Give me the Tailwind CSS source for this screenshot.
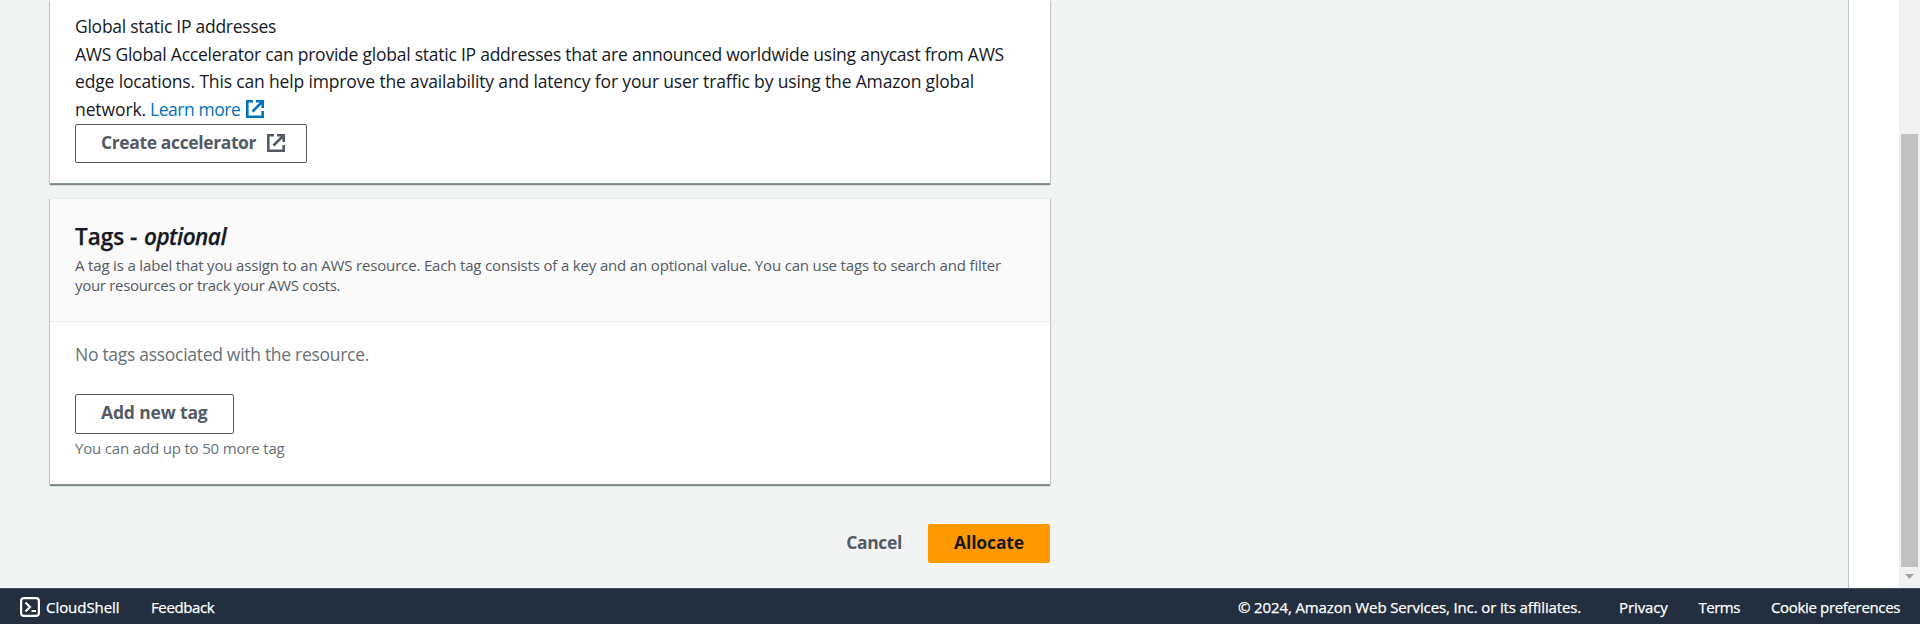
<!DOCTYPE html>
<html lang="en">
<head>
<meta charset="utf-8">
<title>Allocate Elastic IP address</title>
<script src="https://cdn.jsdelivr.net/npm/@tailwindcss/browser@4"></script>
</head>
<body class="flex h-[624px] w-[1920px] flex-col overflow-hidden bg-white font-['Open_Sans','Noto_Sans',sans-serif] text-[17.5px] leading-[27.5px] text-[#16191f]">
<div class="flex h-[588px] shrink-0">
  <main class="w-[1849px] border-r border-[#bfc6c6] bg-[#f2f3f3] pl-[50px]">
    <div class="w-[1000px]">
      <section class="h-[184px] border-b border-[#879596] bg-white px-[25px] pt-[13px] shadow-[0_1px_1px_0_rgba(0,28,36,.3),1px_1px_1px_0_rgba(0,28,36,.15),-1px_1px_1px_0_rgba(0,28,36,.15)]">
        <div class="whitespace-nowrap tracking-[-0.26px]">Global static IP addresses</div>
        <p class="whitespace-nowrap"><span class="block tracking-[-0.235px]">AWS Global Accelerator can provide global static IP addresses that are announced worldwide using anycast from AWS</span><span class="block tracking-[-0.155px]">edge locations. This can help improve the availability and latency for your user traffic by using the Amazon global</span><span class="flex items-center"><span class="w-[75px] tracking-[-0.1px]">network.</span><a class="flex items-center gap-[6px] tracking-[-0.45px] text-[#0073bb]">Learn more
          <svg class="size-[18px]" viewBox="0 0 18 18" fill="none" stroke="currentColor" stroke-width="2.6"><path d="M7 1.3H1.3v15.4h15.4V11M10 1.3h6.7V8M16.5 1.5L6.5 11.5"/></svg></a></span></p>
        <button class="mt-[1px] flex h-[39px] w-[232px] items-center rounded-[2px] border border-[#545b64] pb-[1px] pl-[25px] font-bold tracking-[-0.38px] text-[#545b64]"><span class="w-[166px] text-left">Create accelerator</span><svg class="size-[18px]" viewBox="0 0 18 18" fill="none" stroke="currentColor" stroke-width="2.6"><path d="M7 1.3H1.3v15.4h15.4V11M10 1.3h6.7V8M16.5 1.5L6.5 11.5"/></svg></button>
      </section>
      <section class="mt-[14px] h-[287px] border-b border-[#879596] bg-white shadow-[0_1px_1px_0_rgba(0,28,36,.3),1px_1px_1px_0_rgba(0,28,36,.15),-1px_1px_1px_0_rgba(0,28,36,.15)]">
        <header class="h-[124px] border-y border-t-[#eaeded] border-b-[#eaeded] bg-[#fafafa] px-[25px] pt-[23px]">
          <h2 class="flex whitespace-nowrap text-[22.5px] leading-[30px] font-semibold [-webkit-text-stroke:0.25px_#16191f]"><span class="w-[69px]">Tags -</span><i class="tracking-[-0.5px]">optional</i></h2>
          <p class="mt-[3px] whitespace-nowrap text-[15px] leading-5 text-[#545b64]"><span class="block tracking-[-0.165px]">A tag is a label that you assign to an AWS resource. Each tag consists of a key and an optional value. You can use tags to search and filter</span><span class="block tracking-[-0.31px]">your resources or track your AWS costs.</span></p>
        </header>
        <div class="px-[25px] pt-[19px]">
          <p class="tracking-[-0.29px] text-[#687078]">No tags associated with the resource.</p>
          <button class="mt-[25px] flex h-[40px] w-[159px] items-center rounded-[2px] border border-[#545b64] pb-[1px] pl-[25px] font-bold tracking-[-0.15px] text-[#545b64]">Add new tag</button>
          <p class="mt-1 text-[15px] leading-5 tracking-[-0.17px] text-[#687078]">You can add up to 50 more tag</p>
        </div>
      </section>
      <div class="mt-[39px] flex justify-end font-bold">
        <button class="mr-[26px] h-[39px] pb-[1px] tracking-[-0.35px] text-[#545b64]">Cancel</button>
        <button class="h-[39px] w-[122px] rounded-[2px] bg-[#ff9900] pb-[1px] tracking-[-0.15px] text-[#16191f]">Allocate</button>
      </div>
    </div>
  </main>
  <div class="ml-auto flex w-[21px] flex-col items-center bg-[#f1f1f1] pt-[134px]">
    <div class="h-[433px] w-[17px] bg-[#c1c1c1]"></div>
    <svg class="mt-[7px] h-[5px] w-[9px]" viewBox="0 0 9 5"><path d="M0 0h9L4.5 5z" fill="#a3a3a3"/></svg>
  </div>
</div>
<footer class="flex h-[36px] items-center border-t border-[#414d5c] bg-[#232f3e] pr-5 pl-5 text-[15px] leading-5 whitespace-nowrap text-white [-webkit-text-stroke:0.25px_white]">
  <svg class="size-5" viewBox="0 0 20 20" fill="none" stroke="currentColor" stroke-width="2.2"><rect x="1.1" y="1.1" width="17.8" height="17.8" rx="3"/><path d="M5.5 5.5l4.500 4.500-4.500 4.500M11.500 14h4.500"/></svg>
  <span class="ml-[6px] w-[105px] tracking-[-0.05px]">CloudShell</span>
  <span class="tracking-[-0.38px]">Feedback</span>
  <span class="ml-auto w-[381px] tracking-[-0.13px]">© 2024, Amazon Web Services, Inc. or its affiliates.</span>
  <span class="w-[79.5px] tracking-[-0.1px]">Privacy</span>
  <span class="w-[72.5px] tracking-[-0.5px]">Terms</span>
  <span class="w-[129px] tracking-[-0.34px]">Cookie preferences</span>
</footer>
</body>
</html>
